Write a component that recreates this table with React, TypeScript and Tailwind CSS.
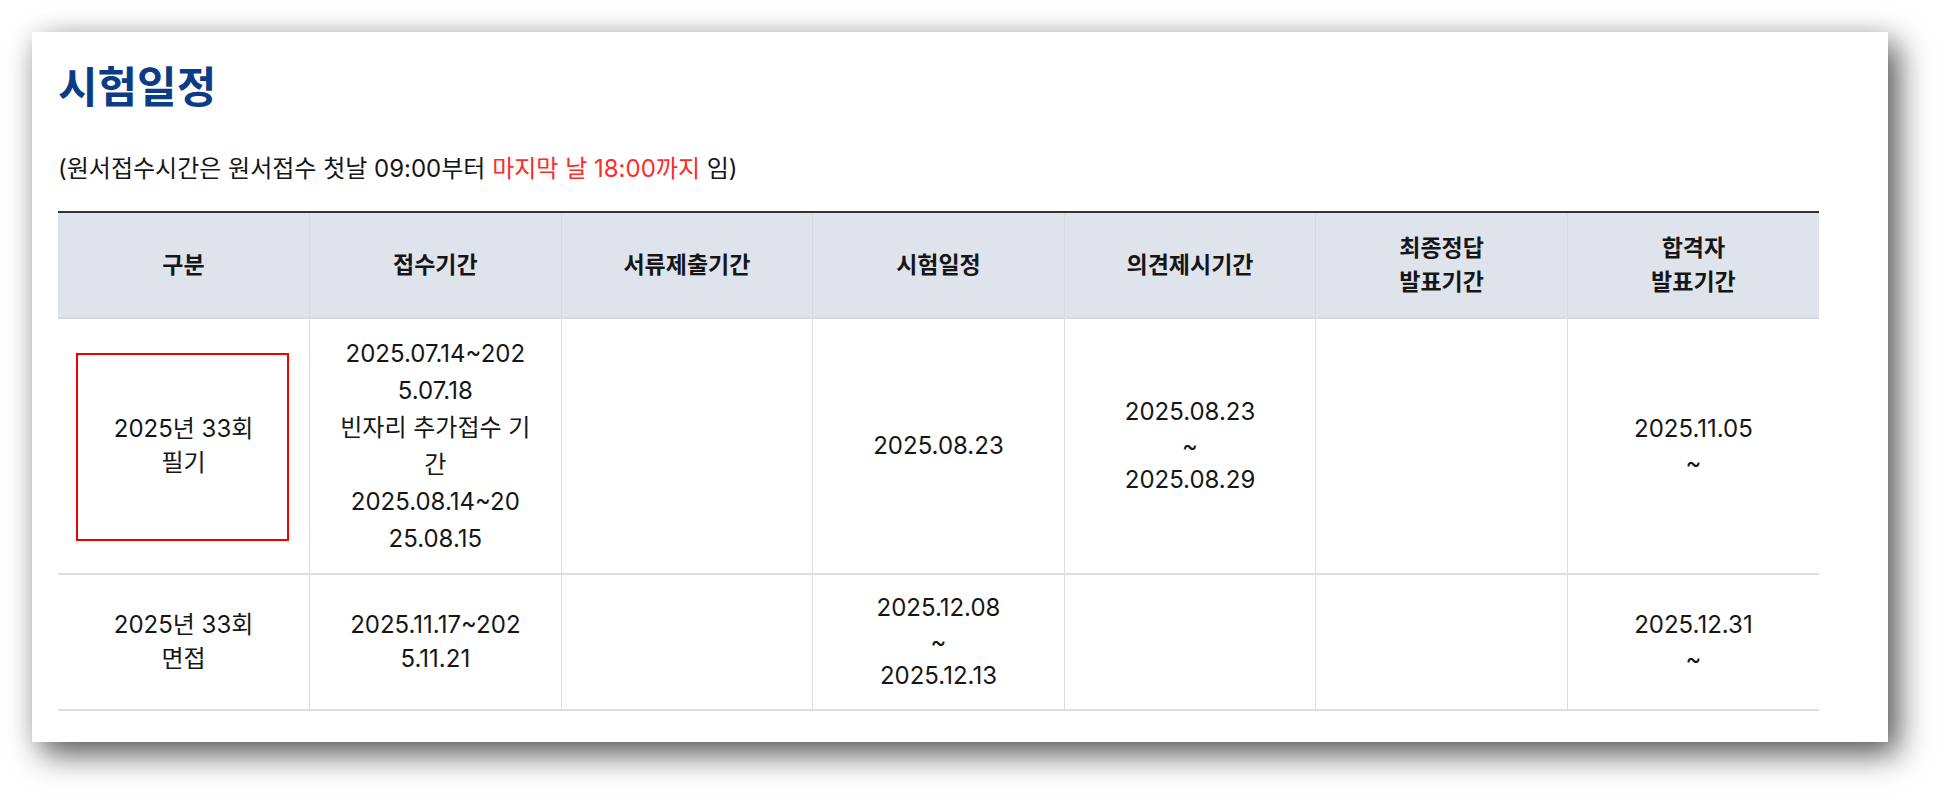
import React from 'react';

type Cell = { lines: string[]; tall?: boolean; marked?: boolean };

const headers: string[][] = [
  ['구분'],
  ['접수기간'],
  ['서류제출기간'],
  ['시험일정'],
  ['의견제시기간'],
  ['최종정답', '발표기간'],
  ['합격자', '발표기간'],
];

const rows: Cell[][] = [
  [
    { lines: ['2025년 33회', '필기'], marked: true },
    {
      lines: ['2025.07.14~202', '5.07.18', '빈자리 추가접수 기', '간', '2025.08.14~20', '25.08.15'],
      tall: true,
    },
    { lines: [] },
    { lines: ['2025.08.23'] },
    { lines: ['2025.08.23', '~', '2025.08.29'] },
    { lines: [] },
    { lines: ['2025.11.05', '~'] },
  ],
  [
    { lines: ['2025년 33회', '면접'] },
    { lines: ['2025.11.17~202', '5.11.21'] },
    { lines: [] },
    { lines: ['2025.12.08', '~', '2025.12.13'] },
    { lines: [] },
    { lines: [] },
    { lines: ['2025.12.31', '~'] },
  ],
];

const font = { fontFamily: '"Inter", "Noto Sans CJK KR", sans-serif' };

export default function App() {
  return (
    <div className="min-h-screen bg-white pt-[32px] pl-[32px]" style={font}>
      <div className="w-[1856px] bg-white pl-[26px] pr-[69px] pt-[34px] pb-[31px] shadow-[10px_12px_30px_rgba(0,0,0,0.65),0_0_24px_rgba(0,0,0,0.07)]">
        <h1 className="text-[43px] font-bold leading-none text-[#0c3c86]">시험일정</h1>

        <p className="mt-[48px] text-[24px] leading-none text-[#161616]">
          (원서접수시간은 원서접수 첫날 09:00부터{' '}
          <span className="text-[#ff2b2b]">마지막 날 18:00까지</span> 임)
        </p>

        <table className="mt-[30px] w-full table-fixed border-collapse border-t-2 border-[#333333]">
          <thead>
            <tr className="bg-[#dfe3ec]">
              {headers.map((h, i) => (
                <th
                  key={i}
                  className="border-b-2 border-l border-[#d6d9df] py-[18px] text-center align-middle text-[23px] font-bold leading-[34px] text-[#161616] first:border-l-0"
                >
                  {h.map((t, j) => (
                    <div key={j}>{t}</div>
                  ))}
                </th>
              ))}
            </tr>
          </thead>
          <tbody>
            {rows.map((row, r) => (
              <tr key={r} className="border-b-2 border-[#dedede]">
                {row.map((c, i) => (
                  <td
                    key={i}
                    className={`relative border-l border-[#dedede] py-4 text-center align-middle text-[24px] text-[#161616] first:border-l-0 ${
                      c.tall ? 'leading-[37px]' : 'leading-[34px]'
                    }`}
                  >
                    {c.lines.map((t, j) => (
                      <div key={j}>{t}</div>
                    ))}
                    {c.marked && (
                      <div className="absolute top-[34px] right-[20px] bottom-[32px] left-[18px] border-2 border-[#f00000]" />
                    )}
                  </td>
                ))}
              </tr>
            ))}
          </tbody>
        </table>
      </div>
    </div>
  );
}
